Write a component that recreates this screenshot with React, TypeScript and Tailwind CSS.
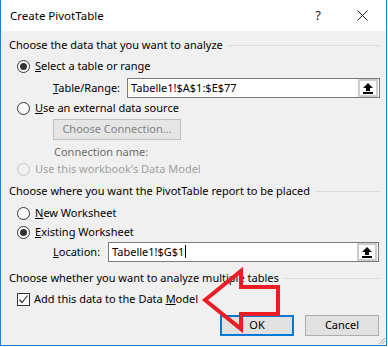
import React from "react";

const font = { fontFamily: '"Noto Sans", "Segoe UI", sans-serif' };

function Radio({ checked, disabled }: { checked?: boolean; disabled?: boolean }) {
  return (
    <span
      className={`flex h-[13px] w-[13px] shrink-0 items-center justify-center rounded-full border ${
        disabled ? "border-[#c6c6c6] bg-[#f0f0f0]" : "border-[#333333] bg-white"
      }`}
    >
      {checked && <span className="h-[7px] w-[7px] rounded-full bg-[#333333]" />}
    </span>
  );
}

function Heading({ text }: { text: string }) {
  return (
    <div className="flex h-[20px] items-center pl-[8px] pr-[6px] text-[11px] text-black">
      <span className="whitespace-nowrap">{text}</span>
      <span className="ml-[5px] h-px flex-1 bg-[#dcdcdc]" />
    </div>
  );
}

function UploadButton() {
  return (
    <div className="flex h-[18px] w-[20px] shrink-0 items-center justify-center border-2 border-[#cccccc] bg-white">
      <svg width="10" height="11" viewBox="0 0 10 11">
        <polygon points="5,0 10,5 7,5 7,8 3,8 3,5 0,5" fill="#000" />
        <rect x="0" y="9" width="10" height="2" fill="#000" />
      </svg>
    </div>
  );
}

export default function App() {
  return (
    <div className="relative h-[347px] w-[388px] overflow-hidden bg-white" style={font}>
      <div className="flex h-[346px] w-[387px] flex-col border-x border-b border-[#1f7fd6] bg-[#f0f0f0]">
        {/* Title bar */}
        <div className="flex h-[31px] shrink-0 items-center bg-white text-[11px] text-black">
          <span className="pl-[9px] text-[11.5px]">Create PivotTable</span>
          <span className="ml-auto mr-[36px] text-[13px] text-[#222]">?</span>
          <svg className="mr-[18px]" width="11" height="11" viewBox="0 0 11 11">
            <path d="M0.5 0.5 L10.5 10.5 M10.5 0.5 L0.5 10.5" stroke="#222" strokeWidth="1" />
          </svg>
        </div>

        <div className="mt-[4px]">
          <Heading text="Choose the data that you want to analyze" />
        </div>

        <div className="mt-[1px] flex h-[20px] items-center gap-[5px] pl-[16px] text-[11px] text-black">
          <Radio checked />
          <span>
            <u>S</u>elect a table or range
          </span>
        </div>

        <div className="mt-[2px] flex h-[20px] items-center text-[11px] text-black">
          <span className="w-[126px] shrink-0 pl-[52px]">
            <u>T</u>able/Range:
          </span>
          <div className="flex h-[20px] w-[253px] shrink-0 items-center border border-[#7a7a7a] bg-white pl-[3px] pr-[1px]">
            <span className="flex-1">Tabelle1!$A$1:$E$77</span>
            <UploadButton />
          </div>
        </div>

        <div className="flex h-[20px] items-center gap-[5px] pl-[16px] text-[11px] text-black">
          <Radio />
          <span>
            <u>U</u>se an external data source
          </span>
        </div>

        <div className="mt-[1px] pl-[52px]">
          <div className="flex h-[21px] w-[128px] items-center justify-center border border-[#bfbfbf] bg-[#e5e5e5] text-[11px] text-[#838383]">
            Choose Connection...
          </div>
        </div>

        <div className="mt-[4px] flex h-[16px] items-center pl-[53px] text-[11px] text-[#6d6d6d]">
          Connection name:
        </div>

        <div className="mt-[1px] flex h-[16px] items-center gap-[5px] pl-[16px] text-[11px] text-[#a0a0a0]">
          <Radio disabled />
          <span>Use this workbook's Data Model</span>
        </div>

        <div className="mt-[4px]">
          <Heading text="Choose where you want the PivotTable report to be placed" />
        </div>

        <div className="mt-[3px] flex h-[18px] items-center gap-[5px] pl-[16px] text-[11px] text-black">
          <Radio />
          <span>
            <u>N</u>ew Worksheet
          </span>
        </div>

        <div className="mt-[1px] flex h-[18px] items-center gap-[5px] pl-[16px] text-[11px] text-black">
          <Radio checked />
          <span>
            <u>E</u>xisting Worksheet
          </span>
        </div>

        <div className="mt-[1px] flex h-[20px] items-center text-[11px] text-black">
          <span className="w-[107px] shrink-0 pl-[52px]">
            <u>L</u>ocation:
          </span>
          <div className="flex h-[20px] w-[271px] shrink-0 items-center border border-[#7a7a7a] bg-white pl-[3px] pr-[1px]">
            <span className="flex-1">
              Tabelle1!$G$1<span className="ml-px inline-block h-[13px] w-px translate-y-[2px] bg-black" />
            </span>
            <UploadButton />
          </div>
        </div>

        <div className="mt-[6px]">
          <Heading text="Choose whether you want to analyze multiple tables" />
        </div>

        <div className="mt-[1px] flex h-[20px] items-center gap-[4px] pl-[16px] text-[11px] text-black">
          <span className="flex h-[13px] w-[13px] shrink-0 items-center justify-center border border-[#333333] bg-white">
            <svg width="11" height="11" viewBox="0 0 11 11">
              <path d="M1.5 5.5 L4 8.5 L9.5 1.5" stroke="#333" strokeWidth="1.2" fill="none" />
            </svg>
          </span>
          <span>
            Add this data to the Data <u>M</u>odel
          </span>
        </div>

        <div className="mt-[6px] flex justify-end gap-[11px] pr-[7px] text-[11px] text-black">
          <div className="flex h-[21px] w-[74px] shrink-0 items-center justify-center border-2 border-[#0078d7] bg-[#e1e1e1]">
            OK
          </div>
          <div className="flex h-[21px] w-[74px] shrink-0 items-center justify-center border border-[#adadad] bg-[#e1e1e1]">
            Cancel
          </div>
        </div>

        <div className="mt-auto flex justify-end">
          <svg width="8" height="8" viewBox="0 0 8 8">
            <path d="M7 1 L1 7 M7 4 L4 7" stroke="#a0a0a0" strokeWidth="1" />
          </svg>
        </div>
      </div>

      {/* Red arrow annotation */}
      <svg className="pointer-events-none absolute left-0 top-0" width="388" height="347" viewBox="0 0 388 347">
        <polygon
          points="205,300 241,271 241,287 278,287 278,314 241,314 241,329"
          fill="none"
          stroke="#ed1c24"
          strokeWidth="4"
          strokeLinejoin="miter"
        />
      </svg>
    </div>
  );
}
